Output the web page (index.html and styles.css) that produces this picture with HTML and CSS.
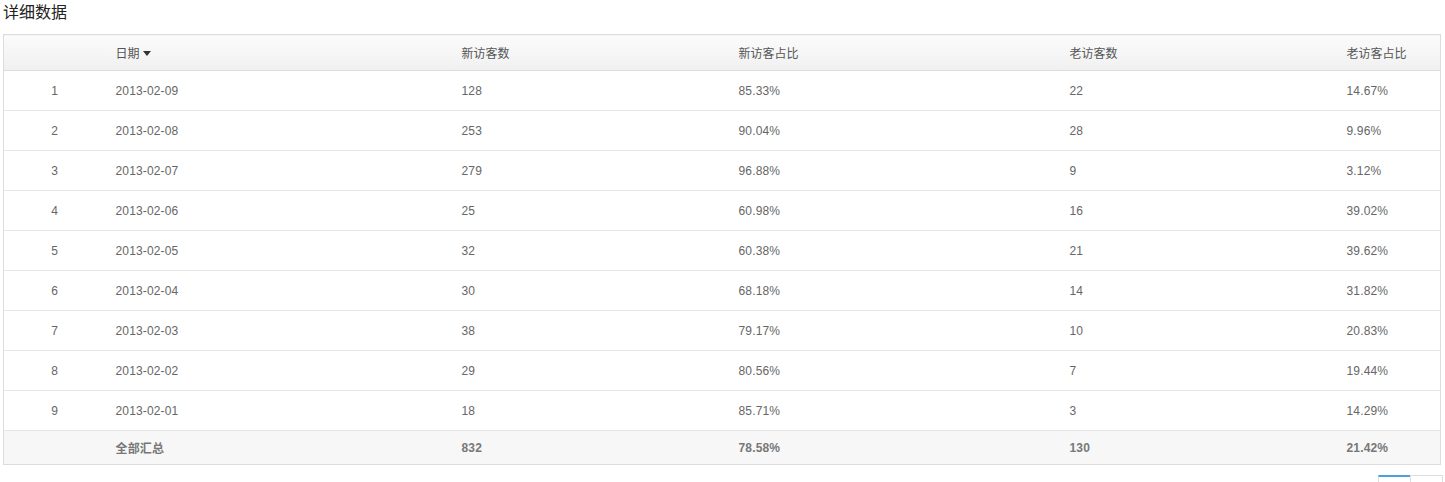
FILE: index.html
```html
<!DOCTYPE html>
<html>
<head>
<meta charset="utf-8">
<link rel="stylesheet" href="styles.css">
</head>
<body>
<div class="wrap">
  <h3 class="title">详细数据</h3>
  <table class="grid">
    <colgroup>
      <col class="c1"><col class="c2"><col class="c3"><col class="c4"><col class="c5"><col class="c6">
    </colgroup>
    <thead>
      <tr>
        <th class="idx"></th>
        <th>日期 <span class="caret"></span></th>
        <th>新访客数</th>
        <th>新访客占比</th>
        <th>老访客数</th>
        <th>老访客占比</th>
      </tr>
    </thead>
    <tbody>
      <tr><td class="idx">1</td><td>2013-02-09</td><td>128</td><td>85.33%</td><td>22</td><td>14.67%</td></tr>
      <tr><td class="idx">2</td><td>2013-02-08</td><td>253</td><td>90.04%</td><td>28</td><td>9.96%</td></tr>
      <tr><td class="idx">3</td><td>2013-02-07</td><td>279</td><td>96.88%</td><td>9</td><td>3.12%</td></tr>
      <tr><td class="idx">4</td><td>2013-02-06</td><td>25</td><td>60.98%</td><td>16</td><td>39.02%</td></tr>
      <tr><td class="idx">5</td><td>2013-02-05</td><td>32</td><td>60.38%</td><td>21</td><td>39.62%</td></tr>
      <tr><td class="idx">6</td><td>2013-02-04</td><td>30</td><td>68.18%</td><td>14</td><td>31.82%</td></tr>
      <tr><td class="idx">7</td><td>2013-02-03</td><td>38</td><td>79.17%</td><td>10</td><td>20.83%</td></tr>
      <tr><td class="idx">8</td><td>2013-02-02</td><td>29</td><td>80.56%</td><td>7</td><td>19.44%</td></tr>
      <tr><td class="idx">9</td><td>2013-02-01</td><td>18</td><td>85.71%</td><td>3</td><td>14.29%</td></tr>
    </tbody>
    <tfoot>
      <tr><td class="idx"></td><td>全部汇总</td><td>832</td><td>78.58%</td><td>130</td><td>21.42%</td></tr>
    </tfoot>
  </table>
  <div class="pager">
    <span class="page active"></span>
    <span class="page"></span>
  </div>
</div>
</body>
</html>
```
FILE: styles.css
```css
html, body {
  margin: 0;
  padding: 0;
  background: #fff;
}
body {
  font-family: "Liberation Sans", "Noto Sans CJK SC", sans-serif;
  font-size: 12px;
  color: #666;
}
.wrap {
  padding-left: 3px;
  width: 1437px;
}
.title {
  margin: 0 0 8px 0;
  font-size: 16px;
  font-weight: normal;
  line-height: 26px;
  color: #222;
}
.grid {
  width: 1437px;
  border-collapse: collapse;
  table-layout: fixed;
  border: 1px solid #dcdcdc;
}
.c1 { width: 102px; }
.c2 { width: 346px; }
.c3 { width: 277px; }
.c4 { width: 331px; }
.c5 { width: 277px; }
.c6 { width: 104px; }
.grid th {
  height: 35px;
  padding: 0 0 0 10px;
  text-align: left;
  font-weight: normal;
  color: #555;
  background: linear-gradient(#fbfbfb, #f0f0f0);
  border-bottom: 1px solid #dcdcdc;
}
.grid td {
  height: 39px;
  padding: 0 0 0 10px;
  text-align: left;
  border-bottom: 1px solid #e6e6e6;
  color: #666;
  letter-spacing: 0.15px;
}
.grid .idx {
  text-align: center;
  padding: 0;
}
.grid tfoot td {
  height: 33px;
  background: #f7f7f7;
  font-weight: bold;
  color: #777;
  border-bottom: 1px solid #dcdcdc;
}
.caret {
  display: inline-block;
  width: 0;
  height: 0;
  border-left: 4px solid transparent;
  border-right: 4px solid transparent;
  border-top: 5px solid #333;
  vertical-align: 2px;
}
.pager {
  display: flex;
  justify-content: flex-end;
  margin-top: 10px;
  margin-right: -3px;
}
.page {
  box-sizing: border-box;
  width: 33px;
  height: 26px;
  border: 1px solid #ddd;
  margin-left: -1px;
}
.page.active {
  border-top: 2px solid #4aa3d6;
}
```
